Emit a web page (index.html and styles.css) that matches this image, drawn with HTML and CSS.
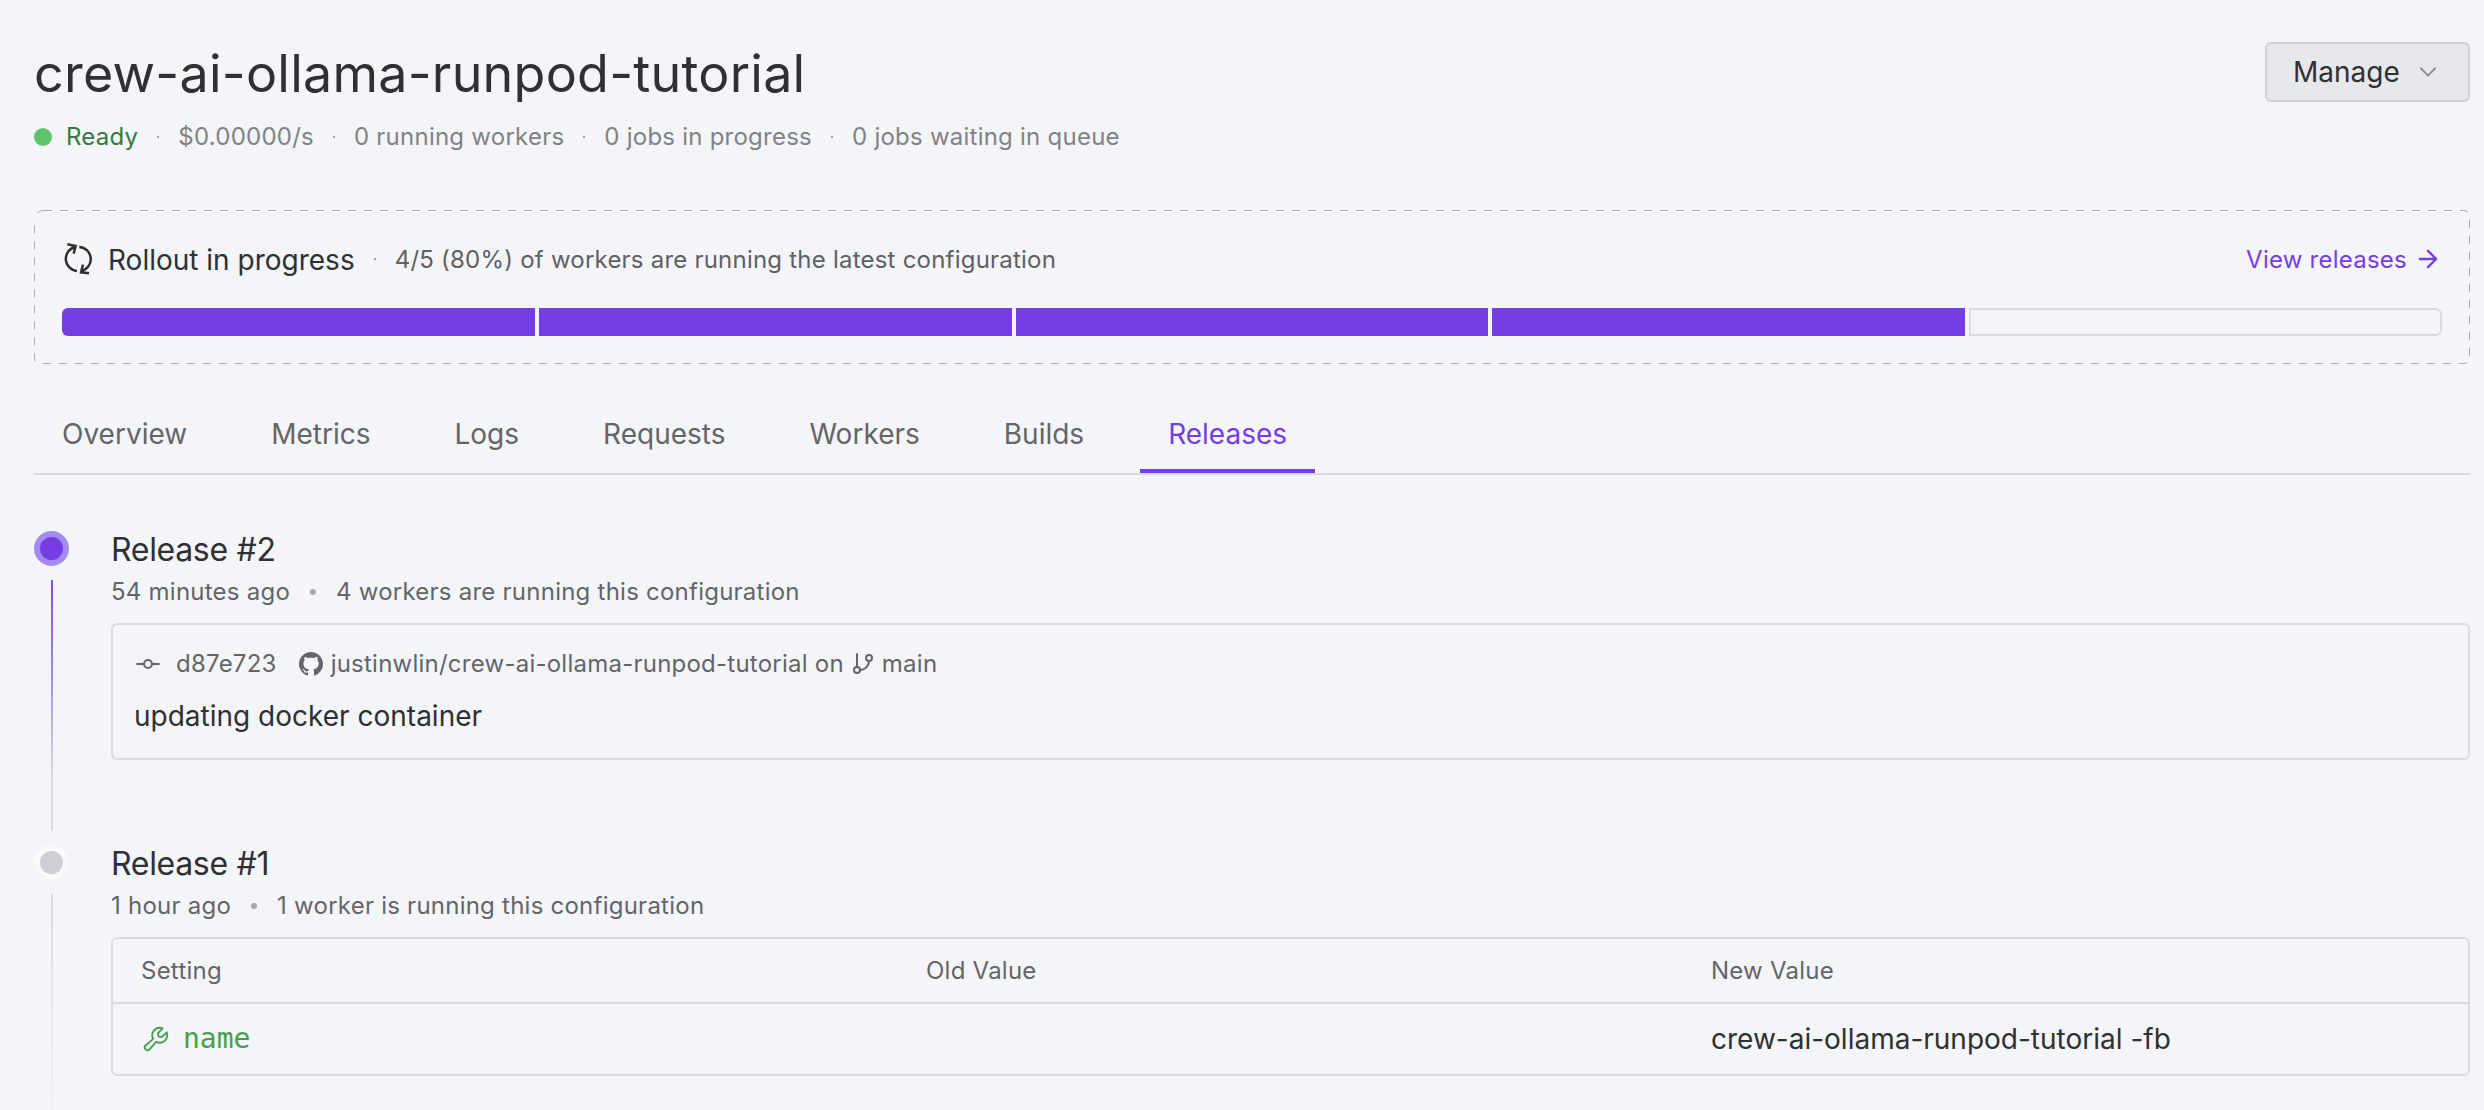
FILE: index.html
```html
<!DOCTYPE html>
<html lang="en">
<head>
<meta charset="utf-8">
<title>crew-ai-ollama-runpod-tutorial</title>
<link rel="stylesheet" href="styles.css">
</head>
<body>
<main class="page">
  <header class="header">
    <div>
      <h1 class="title">crew-ai-ollama-runpod-tutorial</h1>
      <div class="status">
        <span class="ready"><i class="ready-dot"></i>Ready</span>
        <i class="sep"></i><span>$0.00000/s</span>
        <i class="sep"></i><span>0 running workers</span>
        <i class="sep"></i><span>0 jobs in progress</span>
        <i class="sep"></i><span>0 jobs waiting in queue</span>
      </div>
    </div>
    <button class="manage">Manage
      <svg class="icon-28 chevron" viewBox="0 0 24 24"><path d="M6 9l6 6 6-6"/></svg>
    </button>
  </header>

  <section class="rollout">
    <svg class="rollout-frame" viewBox="0 0 2436 154"><path stroke-dasharray="8 8" d="M10 .5H2429.500Q2435.500 .5 2435.500 6.500V147.500Q2435.500 153.500 2429.500 153.500H6.500Q.5 153.500 .5 147.500V8"/><path d="M3.500 3.200Q5.500 .5 10 .5"/></svg>
    <div class="rollout-row">
      <svg class="rollout-icon" viewBox="114 129 96 96"><path d="M159 213A36.500 36.500 0 0 1 154 141M130 133l25 5-6 23M166 141A36.500 36.500 0 0 1 172 213M195 220l-24-3 6-23"/></svg>
      <span class="rollout-title">Rollout in progress</span>
      <i class="sep"></i>
      <span class="rollout-text">4/5 (80%) of workers are running the latest configuration</span>
      <a class="view"><span>View releases</span>
        <svg class="icon-28" viewBox="0 0 24 24"><path d="M5 12h14M12 5l7 7-7 7"/></svg>
      </a>
    </div>
    <div class="bar"><i></i><i></i><i></i><i></i><i class="pending"></i></div>
  </section>

  <nav class="tabs">
    <a class="tab">Overview</a><a class="tab">Metrics</a><a class="tab">Logs</a><a class="tab">Requests</a><a class="tab">Workers</a><a class="tab">Builds</a><a class="tab active">Releases</a>
  </nav>

  <section class="timeline">
    <article class="release">
      <div class="rail"><i class="node current"></i><i class="line current"></i></div>
      <div class="body">
        <h2 class="name">Release #2</h2>
        <div class="meta"><span>54 minutes ago</span><i class="bullet"></i><span>4 workers are running this configuration</span></div>
        <div class="card commit">
          <div class="commit-row">
            <svg class="icon-24 commit-icon" viewBox="0 0 24 24"><circle cx="12" cy="12" r="4"/><path d="M1.050 12H7M17 12h5.960"/></svg>
            <span class="hash">d87e723</span>
            <svg class="github" viewBox="0 0 16 16"><path d="M8 0C3.580 0 0 3.580 0 8c0 3.540 2.290 6.530 5.470 7.590.4.070.55-.17.55-.38 0-.19-.01-.82-.01-1.490-2.010.37-2.530-.49-2.690-.94-.09-.23-.48-.94-.82-1.130-.28-.15-.68-.52-.01-.53.63-.01 1.080.58 1.230.82.72 1.210 1.870.87 2.330.66.07-.52.28-.87.51-1.070-1.780-.2-3.640-.89-3.640-3.950 0-.87.31-1.590.82-2.150-.08-.2-.36-1.020.08-2.120 0 0 .67-.21 2.200.82.64-.18 1.320-.27 2-.27s1.360.09 2 .27c1.530-1.040 2.200-.82 2.200-.82.44 1.100.16 1.920.08 2.120.51.56.82 1.270.82 2.150 0 3.070-1.870 3.750-3.650 3.950.29.25.54.73.54 1.480 0 1.070-.01 1.930-.01 2.200 0 .21.15.46.55.38A8.010 8.010 0 0 0 16 8c0-4.420-3.580-8-8-8z"/></svg>
            <span>justinwlin/crew-ai-ollama-runpod-tutorial on</span>
            <svg class="icon-24 branch" viewBox="0 0 24 24"><path d="M6 2v13M18 9a9 9 0 0 1-9 9"/><circle cx="18" cy="6" r="3"/><circle cx="6" cy="18" r="3"/></svg>
            <span>main</span>
          </div>
          <div class="message">updating docker container</div>
        </div>
      </div>
    </article>

    <article class="release">
      <div class="rail"><i class="node"></i><i class="line"></i></div>
      <div class="body">
        <h2 class="name">Release #1</h2>
        <div class="meta"><span>1 hour ago</span><i class="bullet"></i><span>1 worker is running this configuration</span></div>
        <div class="card">
          <div class="row head"><span>Setting</span><span>Old Value</span><span>New Value</span></div>
          <div class="row">
            <span class="setting">
              <svg class="wrench" viewBox="0 0 256 256"><path d="M226.760,69a8,8,0,0,0-12.840-2.880l-40.300,37.190-17.230-3.700-3.700-17.230,37.190-40.300A8,8,0,0,0,187,29.240,72,72,0,0,0,88,96a72.340,72.340,0,0,0,6,28.940L33.790,177c-.15.12-.29.26-.43.39a32,32,0,0,0,45.260,45.260c.13-.13.27-.28.39-.42L131.060,162A72,72,0,0,0,232,96,71.560,71.560,0,0,0,226.760,69ZM160,152a56.140,56.140,0,0,1-27.070-7,8,8,0,0,0-9.920,1.770L67.110,211.510a16,16,0,0,1-22.620-22.620L109.180,133a8,8,0,0,0,1.770-9.930,56,56,0,0,1,58.360-82.310l-31.200,33.810a8,8,0,0,0-1.940,7.100L141.830,108a8,8,0,0,0,6.140,6.140l26.350,5.660a8,8,0,0,0,7.100-1.940l33.810-31.200A56.060,56.060,0,0,1,160,152Z"/></svg>
              name
            </span>
            <span></span>
            <span>crew-ai-ollama-runpod-tutorial -fb</span>
          </div>
        </div>
      </div>
    </article>
  </section>
</main>
</body>
</html>
```
FILE: styles.css
```css
* { box-sizing: border-box; }
html, body { height: 100%; }
body {
  margin: 0;
  background: #f4f5f9;
  color: #2f3031;
  font-family: Inter, "Liberation Sans", sans-serif;
  font-size: 28px;
  line-height: 40px;
}
svg { flex: none; fill: none; stroke: currentColor; stroke-width: 2; stroke-linecap: round; stroke-linejoin: round; }
.icon-24 { width: 24px; height: 24px; }
.icon-28 { width: 28px; height: 28px; }

.page {
  display: flex;
  flex-direction: column;
  height: 1110px;
  padding: 42px 14px 0 34px;
  overflow: hidden;
}

.header { display: flex; flex: none; justify-content: space-between; align-items: flex-start; height: 168px; }
.title { margin: 0 0 13px; font-size: 52px; line-height: 64px; font-weight: 400; letter-spacing: .24px; }
.status { display: flex; align-items: center; font-size: 24px; line-height: 36px; letter-spacing: .24px; color: #818284; }
.ready { display: flex; align-items: center; gap: 14px; color: #357a3f; }
.ready-dot { width: 18px; height: 18px; border-radius: 50%; background: #5fc367; }
.sep { flex: none; width: 2px; height: 2px; margin: 0 19px; background: #9b9ca0; }
.manage {
  display: flex;
  align-items: center;
  justify-content: space-between;
  width: 205px;
  height: 60px;
  padding: 0 26px;
  border: 2px solid #cfd1d5;
  border-radius: 6px;
  background: #e7e8ec;
  color: inherit;
  font: inherit;
}
.chevron { stroke: #8f9093; stroke-width: 1.7; }

.rollout { position: relative; flex: none; height: 154px; padding: 28px; }
.rollout-frame { position: absolute; inset: 0; width: 2436px; height: 154px; stroke: #a6a7ab; stroke-width: 1; stroke-linecap: butt; }
.rollout-row { display: flex; align-items: center; height: 42px; margin-bottom: 28px; }
.rollout-icon { width: 32px; height: 32px; margin-right: 14px; stroke-width: 7.5; stroke-linecap: butt; stroke-linejoin: miter; }
.rollout-row span { padding-top: 2px; }
.rollout-row .sep { margin: 0 18.5px 0 19.5px; }
.rollout-text { font-size: 24px; letter-spacing: .22px; color: #5f6062; }
.view { display: flex; align-items: center; gap: 7px; margin-left: auto; font-size: 24px; letter-spacing: .24px; color: #763de3; }
.bar { display: grid; grid-template-columns: repeat(5, 1fr); gap: 4px; height: 28px; border-radius: 6px; overflow: hidden; }
.bar i { background: #763de3; }
.bar .pending { border: 2px solid #dadbdf; border-radius: 0 6px 6px 0; background: none; }

.tabs { display: flex; flex: none; gap: 28px; margin-top: 28px; height: 83px; border-bottom: 2px solid #dadbdf; color: #646567; }
.tab { padding: 22px 28px 0; border-bottom: 4px solid transparent; }
.tab.active { border-color: #763de3; color: #763de3; }

.timeline { display: flex; flex-direction: column; margin-top: 56px; }
.release { display: grid; grid-template-columns: 35px 1fr; column-gap: 42px; flex: none; height: 313.500px; }
.rail { display: flex; flex-direction: column; align-items: center; gap: 14px; padding-bottom: 14px; }
.node { flex: none; width: 35px; height: 35px; border: 6px solid #fafafb; border-radius: 50%; background: #cdcfd3; }
.node.current { border-color: #a48bf3; background: #763de3; }
.line { flex: 1; width: 2px; background: linear-gradient(#d9dade, #f4f5f9); }
.line.current { background: linear-gradient(#7c4ce6, #9f83ea 35%, #dadbdf 78%); }
.name { margin: -1px 0 4px; font-size: 32px; line-height: 40px; font-weight: 400; letter-spacing: -.32px; }
.meta { display: flex; align-items: center; font-size: 24px; line-height: 36px; letter-spacing: .24px; color: #646567; }
.bullet { width: 6px; height: 6px; margin: 0 20px; border-radius: 50%; background: #a6a7aa; }
.card { margin-top: 13px; border: 2px solid #dadbdf; border-radius: 6px; }
.commit { height: 137px; padding: 21px 20px 0 21px; }
.commit-row { display: flex; align-items: center; margin-bottom: 14px; font-size: 24px; line-height: 36px; letter-spacing: .24px; color: #646567; }
.commit-icon { margin: 0 16px 0 2px; }
.hash { margin-right: 22px; }
.github { width: 24px; height: 24px; margin-right: 8px; fill: currentColor; stroke: none; }
.branch { margin: 0 7px; }

.row { display: grid; grid-template-columns: repeat(3, 1fr); align-items: center; height: 70px; }
.row > span { padding-left: 28px; }
.head { height: 65px; padding-top: 2px; border-bottom: 2px solid #dadbdf; font-size: 24px; letter-spacing: .24px; color: #646567; }
.setting { display: flex; align-items: center; gap: 12px; color: #46a14f; font-family: "DejaVu Sans Mono", monospace; }
.wrench { width: 30px; height: 30px; fill: currentColor; stroke: none; }
```
